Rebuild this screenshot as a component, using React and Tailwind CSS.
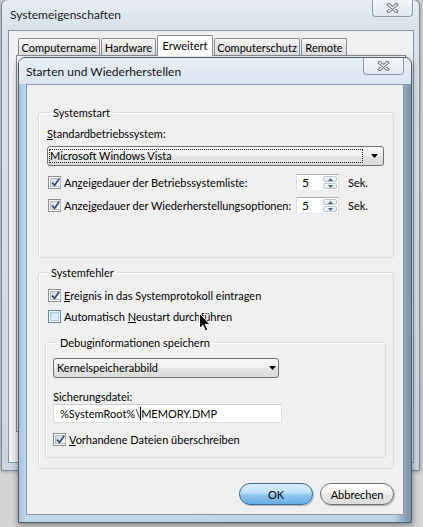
import React from "react";

function XGlyph() {
  return (
    <svg width="13" height="10" viewBox="0 0 13 10">
      <path d="M2.5 1.5 L10.5 8.5 M10.5 1.5 L2.5 8.5" stroke="#66727f" strokeWidth="3.4" strokeLinecap="round" fill="none" />
      <path d="M2.5 1.5 L10.5 8.5 M10.5 1.5 L2.5 8.5" stroke="#f4f6f8" strokeWidth="1.5" strokeLinecap="round" fill="none" />
    </svg>
  );
}

function Check({ checked, hover }) {
  return (
    <span
      className={
        hover
          ? "flex h-[13px] w-[13px] shrink-0 border border-[#5b8db2] bg-white p-px"
          : "flex h-[13px] w-[13px] shrink-0 border border-[#8e8f8f] bg-white p-px"
      }
    >
      <span
        className={
          hover
            ? "flex flex-1 items-center justify-center border border-[#a9cbe6] bg-[linear-gradient(135deg,#c6e0f5,#eff7fd)]"
            : "flex flex-1 items-center justify-center border border-[#b7bcc4] bg-[linear-gradient(135deg,#d3d7dc,#fafafa)]"
        }
      >
        {checked && (
          <svg width="9" height="9" viewBox="0 0 9 9" className="shrink-0 overflow-visible">
            <path d="M1 4.6 L3.6 7.3 L8.2 0.8" stroke="#3a5180" strokeWidth="1.8" fill="none" />
          </svg>
        )}
      </span>
    </span>
  );
}

function Spin() {
  return (
    <div className="flex h-[17px] w-[43px] border border-[#abadb3] border-b-[#e3e9ef] border-x-[#e2e3ea] bg-white">
      <span className="flex-1 pl-[5px] text-[12px] leading-[15px]">5</span>
      <div className="flex w-[15px] flex-col gap-px py-px pr-px">
        <span className="flex flex-1 items-center justify-center rounded-[2px] border border-[#bcc7d3] bg-[linear-gradient(#f5f8fa,#dfe6ee)]">
          <svg width="5" height="3" viewBox="0 0 5 3">
            <path d="M0 3 L2.5 0 L5 3Z" fill="#4d6185" />
          </svg>
        </span>
        <span className="flex flex-1 items-center justify-center rounded-[2px] border border-[#bcc7d3] bg-[linear-gradient(#f5f8fa,#dfe6ee)]">
          <svg width="5" height="3" viewBox="0 0 5 3">
            <path d="M0 0 L5 0 L2.5 3Z" fill="#4d6185" />
          </svg>
        </span>
      </div>
    </div>
  );
}

function Arrow() {
  return (
    <svg width="7" height="4" viewBox="0 0 7 4" className="shrink-0">
      <path d="M0 0H7L3.5 4Z" fill="#000" />
    </svg>
  );
}

export default function App() {
  return (
    <div className="relative h-[527px] w-[423px] overflow-hidden bg-[#d4d4d4] font-['Lato','Liberation_Sans',sans-serif] text-[11px] leading-[15px] text-black">
      {/* Outer window: Systemeigenschaften */}
      <div className="absolute left-[1px] top-[-1px] flex h-[472px] w-[419px] flex-col rounded-t-[7px] border border-[#7d8997] bg-[linear-gradient(to_bottom,#e6ecf2,#d9e2ea_30px,#ccd7e2)] pb-[7px] pl-[6px] pr-[5px] shadow-[0_0_4px_rgba(0,0,0,0.35)]">
        <div className="flex h-[30px] items-start justify-between">
          <span className="ml-[2px] mt-[7px] text-[12px] text-[#1b1b1b]">Systemeigenschaften</span>
          <div className="mr-px flex h-[17px] w-[41px] items-center justify-center rounded-b-[4px] border border-t-0 border-[#8f9cab] bg-[linear-gradient(to_bottom,#f5f7f9,#e3e8ee)]">
            <XGlyph />
          </div>
        </div>
        <div className="flex flex-1 flex-col border border-[#8896a5] bg-[#f0f0f0]">
          <div className="relative z-10 flex h-[25px] items-end gap-px pl-[9px] pt-[4px]">
            <div className="mb-px flex h-[17px] w-[82px] items-center justify-center rounded-t-[2px] border border-b-0 border-[#898c95] bg-[linear-gradient(#f7f7f7,#e8e8e8_50%,#dcdcdc)]">Computername</div>
            <div className="mb-px flex h-[17px] w-[55px] items-center justify-center rounded-t-[2px] border border-b-0 border-[#898c95] bg-[linear-gradient(#f7f7f7,#e8e8e8_50%,#dcdcdc)]">Hardware</div>
            <div className="flex h-[21px] w-[56px] items-center justify-center rounded-t-[2px] border border-b-0 border-[#898c95] bg-white pb-[2px]">Erweitert</div>
            <div className="mb-px flex h-[17px] w-[86px] items-center justify-center rounded-t-[2px] border border-b-0 border-[#898c95] bg-[linear-gradient(#f7f7f7,#e8e8e8_50%,#dcdcdc)]">Computerschutz</div>
            <div className="mb-px flex h-[17px] w-[46px] items-center justify-center rounded-t-[2px] border border-b-0 border-[#898c95] bg-[linear-gradient(#f7f7f7,#e8e8e8_50%,#dcdcdc)]">Remote</div>
          </div>
          <div className="-mt-px ml-[7px] h-[377px] w-[390px] border border-[#898c95] bg-white" />
        </div>
      </div>

      {/* Inner dialog: Starten und Wiederherstellen */}
      <div className="absolute left-[18px] top-[57px] flex h-[466px] w-[394px] flex-col overflow-hidden rounded-t-[7px] border border-[#4f5e70] bg-[linear-gradient(to_right,#a3c2e2,#c3d7ec_7px,#bdd3ea_375px,#93a7bb_385px,#7f8f9f)] shadow-[0_2px_6px_rgba(0,0,0,0.45)]">
        <div className="flex h-[26px] shrink-0 items-start justify-between bg-[linear-gradient(to_bottom,#e9f0f6,#d9e5f0)] px-[7px]">
          <span className="mt-[6px] text-[12px] text-[#111]">Starten und Wiederherstellen</span>
          <div className="flex h-[17px] w-[41px] items-center justify-center rounded-b-[4px] border border-t-0 border-[#8d9aaa] bg-[linear-gradient(to_bottom,#f6f8fa,#e2e8ef)]">
            <XGlyph />
          </div>
        </div>

        <div className="mx-[7px] mb-[7px] flex flex-1 flex-col border border-[#8c9bab] bg-[#f0f0f0] pl-[11px] pr-[9px] pt-[20px]">
          {/* Systemstart */}
          <fieldset className="rounded-[3px] border border-[#d5dfe5] pb-[43px] pl-[8px] pr-[9px] shadow-[inset_1px_1px_0_#ffffff]">
            <legend className="ml-[3px] px-[3px]">Systemstart</legend>
            <div className="mt-[6px]">
              <span className="underline">S</span>tandardbetriebssystem:
            </div>
            <div className="mt-[5px] flex h-[20px] items-center rounded-[3px] border border-[#707070] bg-[linear-gradient(to_bottom,#f8f8f8,#f0f0f0_48%,#e4e4e4_52%,#dadada)] pl-px pr-[4px]">
              <span className="flex h-[14px] flex-1 items-center border border-dotted border-[#222] leading-[12px]">Microsoft Windows Vista</span>
              <span className="ml-[8px] mr-px">
                <Arrow />
              </span>
            </div>
            <div className="mt-[8px] flex h-[17px] items-center">
              <div className="ml-px flex w-[248px] items-center gap-[3px]">
                <Check checked />
                <span className="whitespace-nowrap">
                  An<span className="underline">z</span>eigedauer der Betriebssystemliste:
                </span>
              </div>
              <Spin />
              <span className="ml-[9px]">Sek.</span>
            </div>
            <div className="mt-[6px] flex h-[17px] items-center">
              <div className="ml-px flex w-[248px] items-center gap-[3px]">
                <Check checked />
                <span className="whitespace-nowrap">
                  Anze<span className="underline">i</span>gedauer der Wiederherstellungsoptionen:
                </span>
              </div>
              <Spin />
              <span className="ml-[9px]">Sek.</span>
            </div>
          </fieldset>

          {/* Systemfehler */}
          <fieldset className="mt-[7px] rounded-[3px] border border-[#d5dfe5] pb-[10px] pl-[6px] pr-[7px] pt-[7px] shadow-[inset_1px_1px_0_#ffffff]">
            <legend className="ml-[3px] px-[3px]">Systemfehler</legend>
            <div className="ml-[3px] flex h-[17px] items-center gap-[3px]">
              <Check checked />
              <span>
                <span className="underline">E</span>reignis in das Systemprotokoll eintragen
              </span>
            </div>
            <div className="ml-[3px] mt-[4px] flex h-[17px] items-center gap-[3px]">
              <Check hover />
              <span>
                Automatisch <span className="underline">N</span>eustart durchführen
              </span>
            </div>

            <fieldset className="mt-[10px] rounded-[3px] border border-[#d5dfe5] pb-[9px] pl-[7px] shadow-[inset_1px_1px_0_#ffffff]">
              <legend className="ml-[4px] px-[3px]">Debuginformationen speichern</legend>
              <div className="mt-[8px] flex h-[20px] w-[226px] items-center rounded-[3px] border border-[#707070] bg-[linear-gradient(to_bottom,#f8f8f8,#f0f0f0_48%,#e4e4e4_52%,#dadada)] pl-px pr-[2px]">
                <span className="flex h-[14px] flex-1 items-center border border-transparent pl-px leading-[12px]">Kernelspeicherabbild</span>
                <Arrow />
              </div>
              <div className="mt-[12px] h-[14px] leading-[14px]">Sicherungsdatei:</div>
              <div className="flex h-[19px] w-[229px] items-center border border-[#dedede] border-t-[#c9cbd0] bg-white pl-[6px]">
                <span>%SystemRoot%\</span>
                <span className="h-[13px] w-px bg-black" />
                <span>MEMORY.DMP</span>
              </div>
              <div className="mt-[8px] flex h-[17px] items-center gap-[3px]">
                <Check checked />
                <span>
                  <span className="underline">V</span>orhandene Dateien überschreiben
                </span>
              </div>
            </fieldset>
          </fieldset>

          <div className="mt-[14px] flex justify-end gap-[7px]">
            <button className="flex h-[22px] w-[74px] items-center justify-center rounded-full border border-[#3b6c9b] bg-[linear-gradient(to_bottom,#dcf0fc,#b9def7_45%,#8dc6ee_55%,#6aafe4)] shadow-[1px_1px_1px_rgba(0,0,0,0.25)]">
              OK
            </button>
            <button className="flex h-[22px] w-[74px] items-center justify-center rounded-full border border-[#6f6f6f] bg-[linear-gradient(to_bottom,#ffffff,#f4f4f4_45%,#e6e6e6_55%,#dcdcdc)] shadow-[1px_1px_1px_rgba(0,0,0,0.25)]">
              Abbrechen
            </button>
          </div>
        </div>
      </div>

      {/* Mouse cursor */}
      <svg width="12" height="19" viewBox="0 0 12 19" className="absolute left-[199px] top-[313px]">
        <path d="M0.5 0.5 L0.5 15.5 L4 12.2 L6.6 18 L8.8 17 L6.3 11.4 L11 11.4 Z" fill="#000" stroke="#fff" strokeWidth="1" />
      </svg>
    </div>
  );
}
